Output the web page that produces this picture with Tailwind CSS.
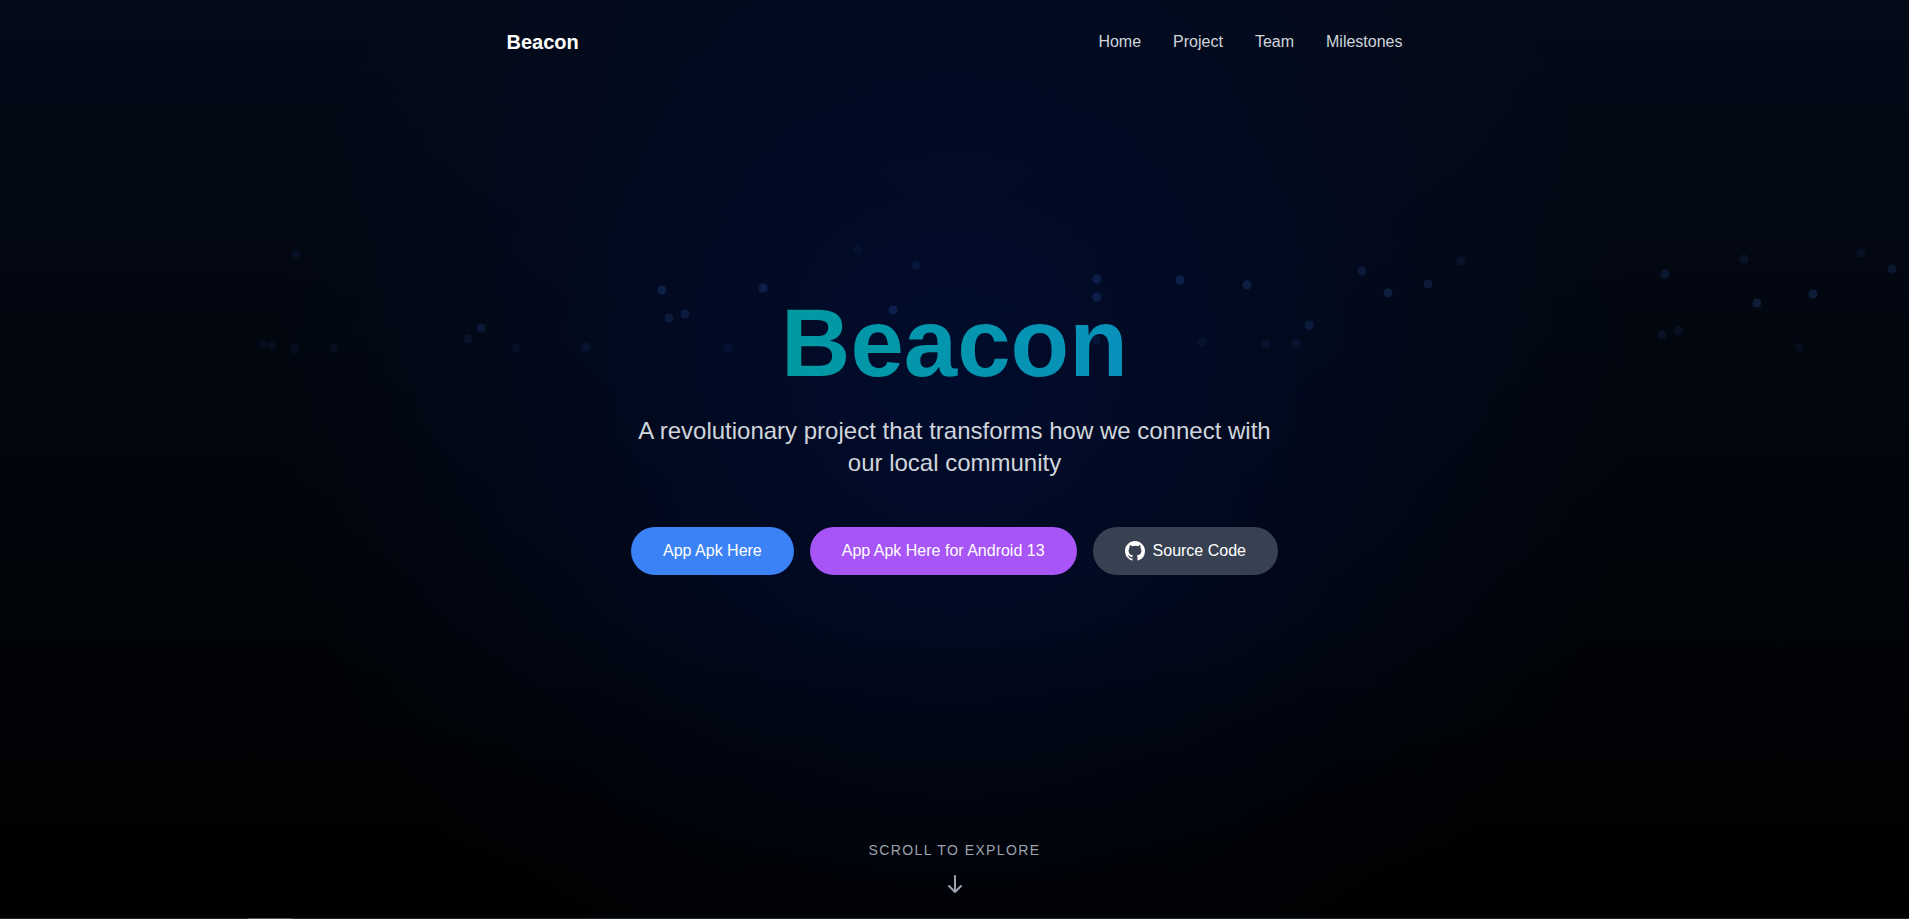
<!DOCTYPE html>
<html lang="en">
<head>
<meta charset="utf-8">
<meta name="viewport" content="width=device-width, initial-scale=1">
<title>Beacon</title>
<script src="https://cdn.jsdelivr.net/npm/@tailwindcss/browser@4"></script>
</head>
<body class="bg-black font-['Liberation_Sans',Arial,sans-serif] text-white">
<div class="relative isolate flex min-h-screen flex-col overflow-hidden bg-[linear-gradient(to_bottom,#030a18,#000)]">
  <!-- Glow and drifting particles -->
  <div class="absolute inset-0 -z-10 bg-[radial-gradient(circle_680px_at_50%_42%,rgb(1_13_48/0.9)_0%,rgb(1_12_44/0.7)_35%,rgb(2_12_42/0.35)_68%,rgb(2_12_42/0)_100%)]"></div>
  <div class="absolute inset-x-0 bottom-0 -z-10 h-1/3 bg-[linear-gradient(to_bottom,rgb(0_0_0/0),rgb(0_0_0/0.4))]"></div>
  <svg class="absolute inset-0 -z-10 h-full w-full fill-[#3b72d6]" viewBox="0 0 1909 919" preserveAspectRatio="xMidYMid slice" aria-hidden="true">
    <g opacity="0.2">
      <circle cx="662" cy="290" r="4.5"/><circle cx="763" cy="288" r="4.5"/><circle cx="893" cy="310" r="4.5"/><circle cx="1097" cy="297" r="4.5"/><circle cx="1097" cy="279" r="4.5"/><circle cx="1180" cy="280" r="4.5"/><circle cx="1247" cy="285" r="4.5"/><circle cx="1388" cy="293" r="4.5"/><circle cx="1757" cy="303" r="4.5"/><circle cx="1813" cy="294" r="4.5"/>
    </g>
    <g opacity="0.16">
      <circle cx="481" cy="328" r="4.5"/><circle cx="669" cy="318" r="4.5"/><circle cx="685" cy="314" r="4.5"/><circle cx="1428" cy="284" r="4.5"/><circle cx="1362" cy="271" r="4.5"/><circle cx="1309" cy="325" r="4.5"/><circle cx="1665" cy="274" r="4.5"/><circle cx="1892" cy="269" r="4.5"/>
    </g>
    <g opacity="0.1">
      <circle cx="296" cy="255" r="4.5"/><circle cx="468" cy="339" r="4.5"/><circle cx="586" cy="347" r="4.5"/><circle cx="916" cy="265" r="4.5"/><circle cx="1096" cy="340" r="4.5"/><circle cx="1461" cy="261" r="4.5"/><circle cx="1296" cy="343" r="4.5"/><circle cx="1744" cy="259" r="4.5"/><circle cx="1861" cy="253" r="4.5"/><circle cx="1662" cy="335" r="4.5"/><circle cx="1678" cy="331" r="4.5"/>
    </g>
    <g opacity="0.07">
      <circle cx="263" cy="344" r="4.5"/><circle cx="272" cy="346" r="4.5"/><circle cx="295" cy="349" r="4.5"/><circle cx="334" cy="348" r="4.5"/><circle cx="516" cy="348" r="4.5"/><circle cx="728" cy="348" r="4.5"/><circle cx="858" cy="249" r="4.5"/><circle cx="1202" cy="342" r="4.5"/><circle cx="1266" cy="344" r="4.5"/><circle cx="1799" cy="347" r="4.5"/>
    </g>
  </svg>

  <header class="mx-auto flex w-full max-w-4xl items-center justify-between py-7">
    <a href="#" class="text-xl font-bold">Beacon</a>
    <nav class="flex gap-8 text-[#d1d5db]">
      <a href="#home">Home</a>
      <a href="#project">Project</a>
      <a href="#team">Team</a>
      <a href="#milestones">Milestones</a>
    </nav>
  </header>

  <main id="home" class="flex flex-1 flex-col items-center justify-center text-center">
    <h1 class="mb-6 bg-[linear-gradient(to_right,#009aa2,#0891bb)] bg-clip-text text-8xl leading-none font-bold text-transparent">Beacon</h1>
    <p class="mb-12 max-w-2xl text-2xl text-[#d1d5db]">A revolutionary project that transforms how we connect with our local community</p>
    <div class="flex flex-wrap justify-center gap-4">
      <button type="button" class="rounded-full bg-[#3b82f6] px-8 py-3">App Apk Here</button>
      <button type="button" class="rounded-full bg-[#a855f7] px-8 py-3">App Apk Here for Android 13</button>
      <button type="button" class="flex items-center gap-2 rounded-full bg-[#374151] px-8 py-3">
        <svg class="size-5" viewBox="2 2 20 20" fill="currentColor" aria-hidden="true"><path fill-rule="evenodd" clip-rule="evenodd" d="M12 2C6.477 2 2 6.484 2 12.017c0 4.425 2.865 8.18 6.839 9.504.5.092.682-.217.682-.483 0-.237-.008-.868-.013-1.703-2.782.605-3.369-1.343-3.369-1.343-.454-1.158-1.11-1.466-1.11-1.466-.908-.62.069-.608.069-.608 1.003.07 1.531 1.032 1.531 1.032.892 1.53 2.341 1.088 2.91.832.092-.647.35-1.088.636-1.338-2.22-.253-4.555-1.113-4.555-4.951 0-1.093.39-1.988 1.029-2.688-.103-.253-.446-1.272.098-2.65 0 0 .84-.27 2.75 1.026A9.564 9.564 0 0112 6.844c.85.004 1.705.115 2.504.337 1.909-1.296 2.747-1.027 2.747-1.027.546 1.379.202 2.398.1 2.651.64.7 1.028 1.595 1.028 2.688 0 3.848-2.339 4.695-4.566 4.943.359.309.678.92.678 1.855 0 1.338-.012 2.419-.012 2.747 0 .268.18.58.688.482A10.019 10.019 0 0022 12.017C22 6.484 17.522 2 12 2z"/></svg>
        Source Code
      </button>
    </div>
  </main>

  <footer class="flex flex-col items-center pt-[54px] text-[#9ca3af]">
    <span class="mb-3 text-sm tracking-widest uppercase">Scroll to explore</span>
    <svg class="mb-[22px] size-6" viewBox="0 0 24 24" fill="none" stroke="currentColor" stroke-width="2" stroke-linecap="round" stroke-linejoin="round" aria-hidden="true"><path d="M12 4v16m6-6l-6 6-6-6"/></svg>
    <div class="flex h-px w-full bg-[#20262d]"><div class="ml-[13%] w-11 bg-[#50565a]"></div></div>
  </footer>
</div>
</body>
</html>
